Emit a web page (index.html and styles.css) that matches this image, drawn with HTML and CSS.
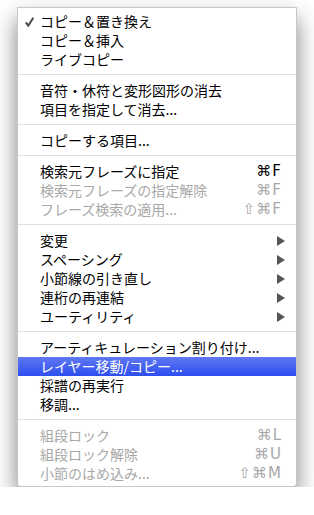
FILE: index.html
```html
<!DOCTYPE html>
<html lang="ja">
<head>
<meta charset="utf-8">
<link rel="stylesheet" href="styles.css">
</head>
<body>
<div class="menu">
  <div class="item"><span class="check"><svg width="9" height="10" viewBox="0 0 9 10"><path d="M0.8 5.5 L3.4 8.6 L8.3 0.8" fill="none" stroke="#4a4a4a" stroke-width="2"/></svg></span><span class="label">コピー＆置き換え</span></div>
  <div class="item"><span class="check"></span><span class="label">コピー＆挿入</span></div>
  <div class="item"><span class="check"></span><span class="label">ライブコピー</span></div>
  <div class="sep"></div>
  <div class="item"><span class="check"></span><span class="label">音符・休符と変形図形の消去</span></div>
  <div class="item"><span class="check"></span><span class="label">項目を指定して消去...</span></div>
  <div class="sep"></div>
  <div class="item"><span class="check"></span><span class="label">コピーする項目...</span></div>
  <div class="sep"></div>
  <div class="item"><span class="check"></span><span class="label">検索元フレーズに指定</span><span class="key">⌘F</span></div>
  <div class="item disabled"><span class="check"></span><span class="label">検索元フレーズの指定解除</span><span class="key">⌘F</span></div>
  <div class="item disabled"><span class="check"></span><span class="label">フレーズ検索の適用...</span><span class="key">⇧⌘F</span></div>
  <div class="sep"></div>
  <div class="item"><span class="check"></span><span class="label">変更</span><span class="arrow"><svg width="8" height="10" viewBox="0 0 8 10"><path d="M0 0 L8 5 L0 10 Z" fill="#555"/></svg></span></div>
  <div class="item"><span class="check"></span><span class="label">スペーシング</span><span class="arrow"><svg width="8" height="10" viewBox="0 0 8 10"><path d="M0 0 L8 5 L0 10 Z" fill="#555"/></svg></span></div>
  <div class="item"><span class="check"></span><span class="label">小節線の引き直し</span><span class="arrow"><svg width="8" height="10" viewBox="0 0 8 10"><path d="M0 0 L8 5 L0 10 Z" fill="#555"/></svg></span></div>
  <div class="item"><span class="check"></span><span class="label">連桁の再連結</span><span class="arrow"><svg width="8" height="10" viewBox="0 0 8 10"><path d="M0 0 L8 5 L0 10 Z" fill="#555"/></svg></span></div>
  <div class="item"><span class="check"></span><span class="label">ユーティリティ</span><span class="arrow"><svg width="8" height="10" viewBox="0 0 8 10"><path d="M0 0 L8 5 L0 10 Z" fill="#555"/></svg></span></div>
  <div class="sep"></div>
  <div class="item"><span class="check"></span><span class="label">アーティキュレーション割り付け...</span></div>
  <div class="item selected"><span class="check"></span><span class="label">レイヤー移動/コピー...</span></div>
  <div class="item"><span class="check"></span><span class="label">採譜の再実行</span></div>
  <div class="item"><span class="check"></span><span class="label">移調...</span></div>
  <div class="sep"></div>
  <div class="item disabled"><span class="check"></span><span class="label">組段ロック</span><span class="key">⌘L</span></div>
  <div class="item disabled"><span class="check"></span><span class="label">組段ロック解除</span><span class="key">⌘U</span></div>
  <div class="item disabled"><span class="check"></span><span class="label">小節のはめ込み...</span><span class="key">⇧⌘M</span></div>
</div>
</body>
</html>
```
FILE: styles.css
```css
html, body {
  margin: 0;
  padding: 0;
  background: #ffffff;
}
body {
  padding: 7px 0 0 17px;
  font-family: "Noto Sans CJK JP", "Noto Sans", sans-serif;
  font-size: 14px;
  color: #000;
}
.menu {
  width: 278px;
  background: #ffffff;
  border: 1px solid rgba(0, 0, 0, 0.22);
  border-radius: 0 0 4px 4px;
  padding: 4px 0 3px;
  box-shadow: 0 11px 22px rgba(0, 0, 0, 0.5);
}
.item {
  display: flex;
  align-items: center;
  height: 19px;
  line-height: 19px;
  padding: 0 11px 0 7px;
  white-space: nowrap;
}
.check {
  width: 15px;
  flex: none;
  display: flex;
  align-items: center;
  padding-top: 1px;
}
.check svg {
  display: block;
}
.label {
  flex: 1;
}
.key {
  font-family: "DejaVu Sans", sans-serif;
  font-size: 15px;
  margin-right: 3px;
  letter-spacing: 1px;
}
.arrow {
  display: flex;
  align-items: center;
}
.arrow svg {
  display: block;
}
.disabled {
  color: #a8a8a8;
}
.selected {
  background: linear-gradient(#5f78f2, #2d4ef0);
  color: #ffffff;
}
.sep {
  height: 1px;
  background: #e0e0e0;
  margin: 5px 0 6px;
}
```
